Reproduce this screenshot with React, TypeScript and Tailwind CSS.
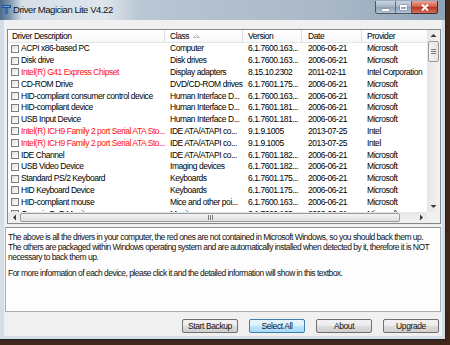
import React from "react";

type Row = [string, string, string, string, string, boolean];

const rows: Row[] = [
  ["ACPI x86-based PC", "Computer", "6.1.7600.163...", "2006-06-21", "Microsoft", false],
  ["Disk drive", "Disk drives", "6.1.7600.163...", "2006-06-21", "Microsoft", false],
  ["Intel(R) G41 Express Chipset", "Display adapters", "8.15.10.2302", "2011-02-11", "Intel Corporation", true],
  ["CD-ROM Drive", "DVD/CD-ROM drives", "6.1.7601.175...", "2006-06-21", "Microsoft", false],
  ["HID-compliant consumer control device", "Human Interface D...", "6.1.7600.163...", "2006-06-21", "Microsoft", false],
  ["HID-compliant device", "Human Interface D...", "6.1.7601.181...", "2006-06-21", "Microsoft", false],
  ["USB Input Device", "Human Interface D...", "6.1.7601.181...", "2006-06-21", "Microsoft", false],
  ["Intel(R) ICH9 Family 2 port Serial ATA Sto...", "IDE ATA/ATAPI co...", "9.1.9.1005", "2013-07-25", "Intel", true],
  ["Intel(R) ICH9 Family 2 port Serial ATA Sto...", "IDE ATA/ATAPI co...", "9.1.9.1005", "2013-07-25", "Intel", true],
  ["IDE Channel", "IDE ATA/ATAPI co...", "6.1.7601.182...", "2006-06-21", "Microsoft", false],
  ["USB Video Device", "Imaging devices", "6.1.7601.182...", "2006-06-21", "Microsoft", false],
  ["Standard PS/2 Keyboard", "Keyboards", "6.1.7601.175...", "2006-06-21", "Microsoft", false],
  ["HID Keyboard Device", "Keyboards", "6.1.7601.175...", "2006-06-21", "Microsoft", false],
  ["HID-compliant mouse", "Mice and other poi...", "6.1.7600.163...", "2006-06-21", "Microsoft", false],
  ["Generic PnP Monitor", "Monitors", "6.1.7600.163...", "2006-06-21", "Microsoft", false],
];

const Arrow = ({ dir }: { dir: "up" | "down" | "left" | "right" }) => {
  const pts = {
    up: "0,4 3,1 6,4",
    down: "0,1 3,4 6,1",
    left: "4,0 1,3 4,6",
    right: "1,0 4,3 1,6",
  }[dir];
  const vertical = dir === "up" || dir === "down";
  return (
    <svg width={vertical ? 7 : 5} height={vertical ? 5 : 7} viewBox={vertical ? "0 0 6 5" : "0 0 5 6"}>
      <polygon points={pts} fill="#3a3a3a" />
    </svg>
  );
};

const Btn = ({ label, focus }: { label: string; focus?: boolean }) => (
  <button
    className={
      "w-[56px] h-[14px] rounded-[2px] border text-[8.5px] tracking-[-0.4px] leading-none text-[#111] " +
      (focus
        ? "border-[#3c7fb1] bg-[linear-gradient(#eaf6fd_0%,#d9f0fc_50%,#bee6fd_51%,#a7d9f5_100%)]"
        : "border-[#707070] bg-[linear-gradient(#f2f2f2_0%,#ebebeb_50%,#dddddd_51%,#cfcfcf_100%)]")
    }
  >
    {label}
  </button>
);

export default function App() {
  return (
    <div className="w-[450px] h-[345px] bg-[#3f2819] overflow-hidden font-['Liberation_Sans',Arial,sans-serif]">
      <div className="w-[446px] h-[340px] bg-[#d5dde5] border-r border-b border-[#1c242e] flex flex-col">
        {/* title bar */}
        <div className="h-[20px] flex items-start bg-[linear-gradient(to_right,#4d6a88_0px,#7893ad_9px,#d6dfe8_22px,#dde5ec_105px,#b9c6d3_140px,#a9b8c7_330px,#8fa3b7_100%)]">
          <svg width="9" height="9" viewBox="0 0 9 9" className="ml-[2px] mt-[5px]">
            <rect x="0" y="0" width="9" height="3" fill="#1f4f8f" />
            <rect x="3" y="3" width="3" height="6" fill="#2d6fb8" />
            <rect x="1" y="1" width="7" height="1" fill="#6fa8e0" />
          </svg>
          <span className="ml-[2px] mt-[4px] text-[9.5px] tracking-[-0.45px] leading-[12px] text-[#121212]">Driver Magician Lite V4.22</span>
          <div className="ml-auto mr-[7px] flex items-start">
            <div className="flex h-[13px] mt-[1px] rounded-bl-[3px] border border-t-0 border-[#4a5766] overflow-hidden">
              <div className="w-[20px] flex items-center justify-center bg-[linear-gradient(#c9d5e1,#a4b4c6_50%,#8ea1b6_51%,#b3c3d3)] border-r border-[#5f6e7e]">
                <div className="w-[7px] h-[2px] bg-white mt-[5px] shadow-[0_0_1px_#333]" />
              </div>
              <div className="w-[15px] flex items-center justify-center bg-[linear-gradient(#c9d5e1,#a4b4c6_50%,#8ea1b6_51%,#b3c3d3)]">
                <div className="w-[7px] h-[5px] border border-white border-t-2 shadow-[0_0_1px_#333]" />
              </div>
            </div>
            <div className="w-[26px] h-[13px] mt-[1px] rounded-br-[3px] border border-t-0 border-l-0 border-[#4a2a26] flex items-center justify-center bg-[linear-gradient(#e8a595,#cf5a48_50%,#b8341f_51%,#d2705c)]">
              <svg width="8" height="7" viewBox="0 0 8 7">
                <path d="M1 0.5 L7 6.5 M7 0.5 L1 6.5" stroke="#fff" strokeWidth="1.8" />
              </svg>
            </div>
          </div>
        </div>

        {/* client area */}
        <div className="mx-[4px] mr-[3px] h-[316px] bg-[#f0f0f0] flex flex-col pt-[9px] text-[8.5px] tracking-[-0.45px] text-black">
          {/* list view */}
          <div className="ml-[3px] mr-[1px] h-[195px] border border-[#828790] bg-white grid grid-cols-[1fr_13px] grid-rows-[182px_11px]">
            <div className="overflow-hidden flex flex-col">
              <div className="h-[13px] shrink-0 flex border-b border-[#e5e5e5] bg-[linear-gradient(#ffffff,#f6f7f8)] leading-[12px]">
                <div className="w-[157px] pl-[4px] border-r border-[#dcdcdc]">Driver Description</div>
                <div className="w-[78px] pl-[5px] border-r border-[#dcdcdc] flex items-center">
                  Class
                  <svg width="7" height="4" viewBox="0 0 7 4" className="ml-[4px]">
                    <polyline points="0.5,3.5 3.5,0.5 6.5,3.5 0.5,3.5" fill="none" stroke="#b4bcc4" strokeWidth="1" />
                  </svg>
                </div>
                <div className="w-[59px] pl-[5px] border-r border-[#dcdcdc]">Version</div>
                <div className="w-[60px] pl-[6px] border-r border-[#dcdcdc]">Date</div>
                <div className="w-[65px] pl-[5px]">Provider</div>
              </div>
              {rows.map((r, i) => (
                <div key={i} className="h-[11.8px] shrink-0 flex items-center leading-[11px] whitespace-nowrap">
                  <div className={"w-[157px] pl-[3px] flex items-center gap-[2px] overflow-hidden " + (r[5] ? "text-[#ff1010]" : "")}>
                    <div className="w-[8px] h-[8px] shrink-0 border border-[#7d7d7d] bg-[linear-gradient(135deg,#dedede,#ffffff)]" />
                    <span>{r[0]}</span>
                  </div>
                  <div className="w-[78px] pl-[5px] overflow-hidden">{r[1]}</div>
                  <div className="w-[59px] pl-[5px] overflow-hidden">{r[2]}</div>
                  <div className="w-[60px] pl-[6px] overflow-hidden">{r[3]}</div>
                  <div className="w-[65px] pl-[5px] overflow-hidden">{r[4]}</div>
                </div>
              ))}
            </div>

            {/* vertical scrollbar */}
            <div className="flex flex-col bg-[linear-gradient(to_right,#e6e6e6,#f2f2f2)]">
              <div className="h-[11px] flex items-center justify-center"><Arrow dir="up" /></div>
              <div className="mx-[1px] h-[21px] rounded-[2px] border border-[#9a9a9a] bg-[linear-gradient(to_right,#f4f4f4,#e2e2e2)] flex flex-col items-center justify-center gap-[1px]">
                <div className="w-[5px] h-px bg-[#7b7b7b]" />
                <div className="w-[5px] h-px bg-[#7b7b7b]" />
                <div className="w-[5px] h-px bg-[#7b7b7b]" />
              </div>
              <div className="flex-1" />
              <div className="h-[11px] flex items-center justify-center"><Arrow dir="down" /></div>
            </div>

            {/* horizontal scrollbar */}
            <div className="flex bg-[linear-gradient(#e6e6e6,#f2f2f2)]">
              <div className="w-[12px] flex items-center justify-center"><Arrow dir="left" /></div>
              <div className="w-[380px] my-[1px] rounded-[2px] border border-[#9a9a9a] bg-[linear-gradient(#f4f4f4,#dedede)] flex items-center justify-center gap-[1px]">
                <div className="w-px h-[5px] bg-[#7b7b7b]" />
                <div className="w-px h-[5px] bg-[#7b7b7b]" />
                <div className="w-px h-[5px] bg-[#7b7b7b]" />
              </div>
              <div className="flex-1" />
              <div className="w-[12px] flex items-center justify-center"><Arrow dir="right" /></div>
            </div>
            <div className="bg-[#f0f0f0]" />
          </div>

          {/* text box */}
          <div className="mt-[3px] ml-[1px] mr-[1px] h-[85px] border border-[#abadb3] border-t-[#8e9299] bg-[#fdfdfd] pl-[2px] pt-[4px] leading-[10px] tracking-[-0.53px] whitespace-nowrap text-[#111]">
            <p>The above is all the drivers in your computer, the red ones are not contained in Microsoft Windows, so you should back them up.</p>
            <p>The others are packaged within Windows operating system and are automatically installed when detected by it, therefore it is NOT</p>
            <p>necessary to back them up.</p>
            <p className="mt-[6px]">For more information of each device, please click it and the detailed information will show in this textbox.</p>
          </div>

          {/* buttons */}
          <div className="mt-[7px] mr-[3px] flex justify-end gap-[11px]">
            <Btn label="Start Backup" />
            <Btn label="Select All" focus />
            <Btn label="About" />
            <Btn label="Upgrade" />
          </div>
        </div>
      </div>
    </div>
  );
}
